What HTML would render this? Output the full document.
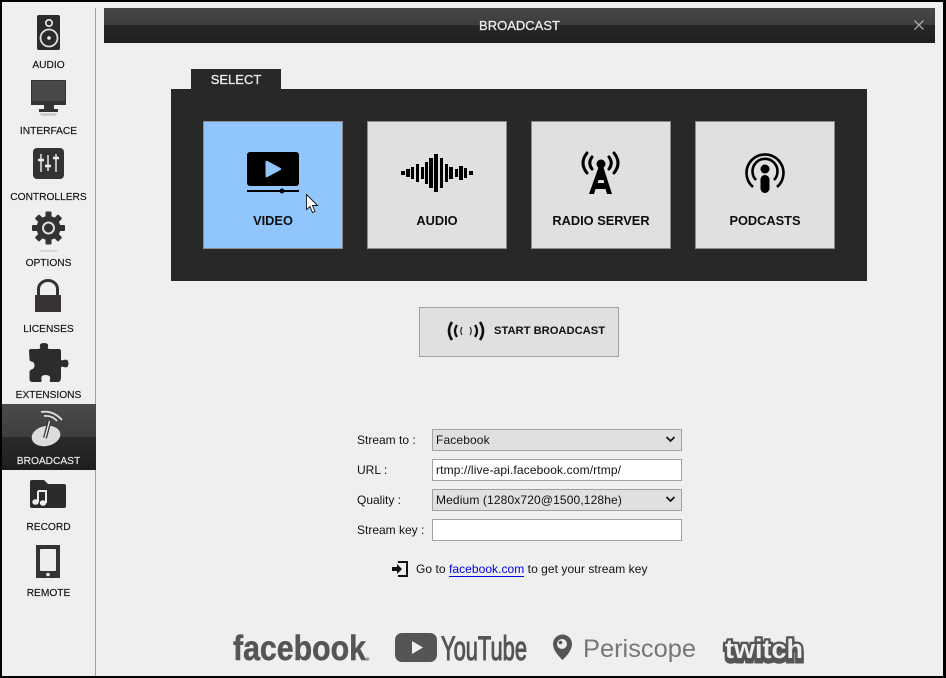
<!DOCTYPE html>
<html><head><meta charset="utf-8">
<style>
html,body{margin:0;padding:0}
body{width:946px;height:678px;position:relative;overflow:hidden;background:#000;font-family:"Liberation Sans",sans-serif;color:#111}
#bg{position:absolute;left:2px;top:2px;width:941px;height:674px;background:#efefef}
.a{position:absolute;white-space:nowrap}
.nav{position:absolute;left:2px;width:93px;text-align:center;font-size:10.2px;line-height:13px;color:#111;-webkit-text-stroke:.15px #111}
.card{position:absolute;top:121px;width:138px;height:126px;background:#e0e0e0;border:1px solid #8c8c8c}
.cl{position:absolute;top:213px;width:140px;text-align:center;font-weight:bold;font-size:12.8px;line-height:16px;color:#0d0d0d}
.lb{position:absolute;left:357px;font-size:12px;line-height:14px;color:#111}
.f{position:absolute;left:432px;width:245px;height:20px;border:1px solid #a0a0a0;padding-left:3px;font-size:12px;line-height:20px;background:#fff;color:#111;white-space:nowrap;letter-spacing:.13px}
.s{background:#e0e0e0}
svg{position:absolute;left:0;top:0}
</style></head><body>
<div id="bg"></div>
<div class="a" style="left:95px;top:8px;width:1px;height:668px;background:#a0a0a0"></div>
<div class="a" style="left:104px;top:8px;width:831px;height:35px;background:linear-gradient(#484848 0,#3c3c3c 48%,#272727 49%,#1e1e1e 100%)"></div>
<div class="a" style="left:104px;top:18px;width:831px;text-align:center;font-size:13px;line-height:15px;color:#eee;-webkit-text-stroke:.25px #eee">BROADCAST</div>
<div class="a" style="left:2px;top:404px;width:94px;height:66px;background:linear-gradient(#4a4a4a 0,#3e3e3e 50%,#2a2a2a 50%,#1e1e1e 100%)"></div>
<div class="nav" style="top:59px">AUDIO</div>
<div class="nav" style="top:125px">INTERFACE</div>
<div class="nav" style="top:191px">CONTROLLERS</div>
<div class="nav" style="top:257px">OPTIONS</div>
<div class="nav" style="top:323px">LICENSES</div>
<div class="nav" style="top:389px">EXTENSIONS</div>
<div class="nav" style="top:455px;color:#eee;-webkit-text-stroke:.15px #eee">BROADCAST</div>
<div class="nav" style="top:521px">RECORD</div>
<div class="nav" style="top:587px">REMOTE</div>
<div class="a" style="left:171px;top:89px;width:696px;height:192px;background:#282828"></div>
<div class="a" style="left:191px;top:69px;width:90px;height:20px;background:#282828;color:#eee;font-size:13px;line-height:21px;text-align:center;-webkit-text-stroke:.3px #eee">SELECT</div>
<div class="card" style="left:203px;background:#90c6fb"></div>
<div class="card" style="left:367px"></div>
<div class="card" style="left:531px"></div>
<div class="card" style="left:695px"></div>
<div class="cl" style="left:203px">VIDEO</div>
<div class="cl" style="left:367px">AUDIO</div>
<div class="cl" style="left:531px">RADIO SERVER</div>
<div class="cl" style="left:695px">PODCASTS</div>
<div class="a" style="left:419px;top:307px;width:198px;height:48px;background:#e0e0e0;border:1px solid #a0a0a0"></div>
<div class="a" style="left:494px;top:324px;font-size:11.2px;font-weight:bold;line-height:14px;color:#111">START BROADCAST</div>
<div class="lb" style="top:433px">Stream to :</div>
<div class="lb" style="top:463px">URL :</div>
<div class="lb" style="top:493px">Quality :</div>
<div class="lb" style="top:523px">Stream key :</div>
<div class="f s" style="top:429px">Facebook</div>
<div class="f" style="top:459px">rtmp://live-api.facebook.com/rtmp/</div>
<div class="f s" style="top:489px">Medium (1280x720@1500,128he)</div>
<div class="f" style="top:519px"></div>
<div class="a" style="left:416px;top:562px;font-size:12px;line-height:14px;color:#111;letter-spacing:.05px">Go to <span style="color:#0000e0;border-bottom:1px solid #0000e0">facebook.com</span> to get your stream key</div>
<svg width="946" height="678" viewBox="0 0 946 678">
<!-- close -->
<path d="M914.500 20.500l9 9m0-9l-9 9" stroke="#aaa" stroke-width="1.300" fill="none"/>
<!-- audio -->
<rect x="37" y="15" width="23" height="35" rx="2" fill="#2b2b2b"/>
<circle cx="49" cy="23" r="3.200" fill="none" stroke="#eee" stroke-width="1.600"/>
<circle cx="49" cy="38" r="8.500" fill="none" stroke="#ddd" stroke-width="1.800"/>
<circle cx="49" cy="38" r="1.800" fill="#eee"/>
<!-- interface -->
<rect x="31" y="80" width="35" height="25" fill="#333"/>
<rect x="32" y="81" width="33" height="20" fill="#484848"/>
<path d="M44 105h10v4h4v3H39v-3h5z" fill="#333"/>
<path d="M39 113h19l-3 3H42z" fill="#ccc"/>
<!-- controllers -->
<rect x="33" y="148" width="31" height="31" rx="4" fill="#333"/>
<path d="M41 154v18M48 155v16M56 154v18" stroke="#ddd" stroke-width="1.600"/>
<path d="M38 160h6M45 166h6M53 158h6" stroke="#eee" stroke-width="2.400"/>
<!-- options -->
<g transform="translate(48.500 228)">
<g fill="#333"><circle r="12"/>
<rect x="-3" y="-16.500" width="6" height="33" rx="1"/>
<rect x="-3" y="-16.500" width="6" height="33" rx="1" transform="rotate(45)"/>
<rect x="-3" y="-16.500" width="6" height="33" rx="1" transform="rotate(90)"/>
<rect x="-3" y="-16.500" width="6" height="33" rx="1" transform="rotate(135)"/></g>
<circle r="5.500" fill="none" stroke="#ddd" stroke-width="2"/>
</g>
<path d="M38 250h21l-3 2H41z" fill="#d8d8d8"/>
<!-- licenses -->
<path d="M38.500 296v-7a9.500 8.500 0 0 1 19 0v7" fill="none" stroke="#333" stroke-width="3"/>
<rect x="35" y="295" width="26" height="17" fill="#383436"/>
<!-- extensions -->
<path d="M29 351q0-2 2-2h7q3 0 2-2.500q-1-3.500 4-3.500q5 0 4 3.500q-1 2.500 2 2.500h9q2 0 2 2v8q0 2 2.500 1q5-1.500 5 3.500q0 5-5 3.500q-2.500-1-2.500 1v9q0 5-3 5h-7q-2 0-1-2.500q1-4.500-4.500-4.500q-5 0-4 4.500q.5 2.500-1 2.500h-8q-3 0-3-3v-7q0-2 2-2.500q3-1 3-4q0-3.500-3-4q-2-.5-2-2z" fill="#2c2c2c"/>
<!-- broadcast -->
<ellipse cx="46" cy="436" rx="14.500" ry="10" transform="rotate(-12 46 436)" fill="#dcdcdc"/>
<path d="M45 438l4.500-17" stroke="#333" stroke-width="4"/>
<path d="M45 438l4.500-17" stroke="#eee" stroke-width="1.400"/>
<path d="M41 412q12-2 21 8M44 416q8-1 13 5" stroke="#ddd" stroke-width="1.800" fill="none"/>
<!-- record -->
<path d="M32 480h12l4 4h16q2 0 2 2v20q0 2-2 2H32q-2 0-2-2v-24q0-2 2-2z" fill="#2b2b2b"/>
<path d="M38 491h8v12" fill="none" stroke="#eee" stroke-width="2"/>
<path d="M38 491v11" stroke="#eee" stroke-width="2"/>
<ellipse cx="35.500" cy="502" rx="3.200" ry="2.800" fill="#eee"/><ellipse cx="43" cy="503" rx="3.200" ry="2.800" fill="#eee"/>
<!-- remote -->
<rect x="36" y="545" width="24" height="33" fill="#333"/>
<rect x="40" y="549" width="16" height="22" rx="1" fill="#eee"/>
<circle cx="48" cy="574.500" r="1.800" fill="#eee"/>
<!-- video icon -->
<rect x="247" y="152" width="52" height="34" rx="3" fill="#000"/>
<path d="M265.500 162q0-2 2-1l13 7q1.500 1 0 2l-13 7q-2 1-2-1z" fill="#90c6fb"/>
<path d="M247 191h52" stroke="#000" stroke-width="2"/><circle cx="282" cy="191" r="2.500" fill="#000"/>
<!-- cursor -->
<path d="M306.500 194.500v15l3.500-3 2.500 6 2.500-1-2.500-6h5z" fill="#fff" stroke="#111" stroke-width=".9"/>
<!-- audio wave -->
<g fill="#000">
<rect x="401" y="171" width="4" height="4"/><rect x="406" y="169" width="4" height="8"/>
<rect x="411" y="167" width="3" height="12"/><rect x="416" y="164" width="3" height="18"/>
<rect x="421" y="167" width="3" height="12"/><rect x="425" y="162" width="3" height="22"/>
<rect x="429" y="158" width="4" height="30"/><rect x="434" y="154" width="4" height="38"/>
<rect x="440" y="158" width="3" height="30"/><rect x="445" y="164" width="3" height="18"/>
<rect x="449" y="167" width="4" height="12"/><rect x="455" y="169" width="3" height="8"/>
<rect x="459" y="166" width="4" height="14"/><rect x="464" y="168" width="3" height="10"/>
<rect x="469" y="171" width="4" height="4"/>
</g>
<!-- radio -->
<g fill="none" stroke="#000" stroke-width="3" stroke-linecap="round">
<path d="M587 153q-8 10 0 20M592 157q-4.500 6 0 12M614 153q8 10 0 20M609 157q4.500 6 0 12"/>
</g>
<circle cx="601" cy="164" r="4.500" fill="#000"/>
<path d="M599 166h4l9 28h-5l-1.500-5h-10l-1.500 5h-5zM598.500 180h5l.8 3h-6.600z" fill="#000" fill-rule="evenodd"/>
<!-- podcast -->
<g fill="none" stroke="#000" stroke-width="2.600">
<path d="M753 187a18.500 18.500 0 1 1 24 0"/>
<path d="M756 180a12.500 12.500 0 1 1 18 0"/>
</g>
<circle cx="765" cy="169" r="4.500" fill="#000"/>
<rect x="760.500" y="175" width="9" height="18" rx="4.500" fill="#000"/>
<!-- start broadcast icon -->
<g fill="none" stroke="#111">
<path d="M452 322q-6 9 0 18M480 322q6 9 0 18" stroke-width="2.600"/>
<path d="M457 325q-4 6 0 12M475 325q4 6 0 12" stroke-width="2.200"/>
<path d="M462 327q-2.500 4 0 8M470 327q2.500 4 0 8" stroke-width="1.100"/>
</g>
<!-- selects -->
<path d="M666.500 437l4 4 4-4M666.500 497l4 4 4-4" fill="none" stroke="#111" stroke-width="1.700"/>
<!-- go icon -->
<path d="M398 562h9v14h-9" fill="none" stroke="#111" stroke-width="2"/>
<path d="M392 567h5v-3l5 5-5 5v-3h-5z" fill="#111"/>
<!-- logos -->
<text x="233" y="660" font-family="Liberation Sans" font-weight="bold" font-size="35" fill="#555" stroke="#555" stroke-width=".5" textLength="133" lengthAdjust="spacingAndGlyphs">facebook</text>
<circle cx="367.500" cy="659" r="1.800" fill="#999"/>
<rect x="395" y="633" width="42" height="29" rx="7" fill="#555"/>
<path d="M412 641l11 6.500-11 6.500z" fill="#efefef"/>
<text x="441" y="660" font-family="Liberation Sans" font-size="34" fill="#555" stroke="#555" stroke-width="1.100" textLength="86" lengthAdjust="spacingAndGlyphs">YouTube</text>
<path d="M562.500 660q-9.500-9-9.500-16a9.500 9.500 0 0 1 19 0q0 7-9.500 16z" fill="#555"/>
<circle cx="562" cy="644" r="5" fill="#efefef"/><circle cx="560.500" cy="642.500" r="1.800" fill="#555"/>
<text x="583" y="657" font-family="Liberation Sans" font-size="25" fill="#777" textLength="113" lengthAdjust="spacingAndGlyphs">Periscope</text>
<text x="725" y="661" font-family="Liberation Sans" font-weight="bold" font-size="27" fill="#555" stroke="#555" stroke-width="5" textLength="78" lengthAdjust="spacingAndGlyphs">twitch</text>
<text x="725" y="658" font-family="Liberation Sans" font-weight="bold" font-size="27" fill="#555" stroke="#555" stroke-width="4.500" textLength="78" lengthAdjust="spacingAndGlyphs">twitch</text>
<text x="725" y="658" font-family="Liberation Sans" font-weight="bold" font-size="27" fill="#efefef" textLength="78" lengthAdjust="spacingAndGlyphs">twitch</text>
</svg>
</body></html>
